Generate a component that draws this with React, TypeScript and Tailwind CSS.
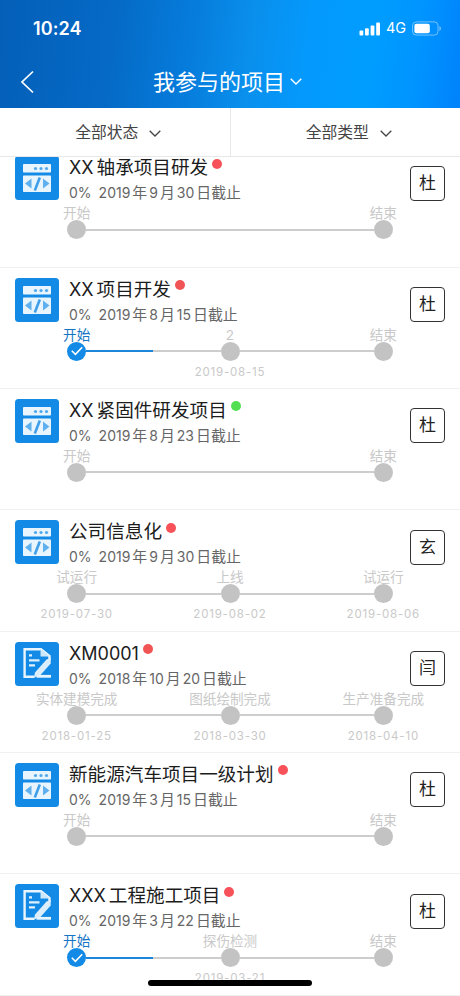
type Step = {
  label?: string;
  date?: string;
  done?: boolean;
  hidden?: boolean;
};

type Project = {
  kind: 'code' | 'doc';
  title: string;
  deadline: string;
  status: string;
  owner: string;
  steps: Step[];
};

const START_END: Step[] = [{ label: '开始' }, { hidden: true }, { label: '结束' }];

const projects: Project[] = [
  { kind: 'code', title: 'XX轴承项目研发', deadline: '2019年9月30日截止', status: 'bg-[#f75259]', owner: '杜', steps: START_END },
  {
    kind: 'code',
    title: 'XX项目开发',
    deadline: '2019年8月15日截止',
    status: 'bg-[#f05455]',
    owner: '杜',
    steps: [{ label: '开始', done: true }, { label: '2', date: '2019-08-15' }, { label: '结束' }],
  },
  { kind: 'code', title: 'XX紧固件研发项目', deadline: '2019年8月23日截止', status: 'bg-[#52e052]', owner: '杜', steps: START_END },
  {
    kind: 'code',
    title: '公司信息化',
    deadline: '2019年9月30日截止',
    status: 'bg-[#f75259]',
    owner: '玄',
    steps: [
      { label: '试运行', date: '2019-07-30' },
      { label: '上线', date: '2019-08-02' },
      { label: '试运行', date: '2019-08-06' },
    ],
  },
  {
    kind: 'doc',
    title: 'XM0001',
    deadline: '2018年10月20日截止',
    status: 'bg-[#f05455]',
    owner: '闫',
    steps: [
      { label: '实体建模完成', date: '2018-01-25' },
      { label: '图纸绘制完成', date: '2018-03-30' },
      { label: '生产准备完成', date: '2018-04-10' },
    ],
  },
  { kind: 'code', title: '新能源汽车项目一级计划', deadline: '2019年3月15日截止', status: 'bg-[#f75259]', owner: '杜', steps: START_END },
  {
    kind: 'doc',
    title: 'XXX工程施工项目',
    deadline: '2019年3月22日截止',
    status: 'bg-[#f75259]',
    owner: '杜',
    steps: [{ label: '开始', done: true }, { label: '探伤检测', date: '2019-03-21' }, { label: '结束' }],
  },
];

// splits mixed text so latin runs get a little air next to CJK
function Mixed({ text, latin }: { text: string; latin: string }) {
  const runs = text.match(/[\x00-\x7f]+|[^\x00-\x7f]+/g) || [];
  return (
    <>
      {runs.map((run, i) => (
        <span key={i} className={run.charCodeAt(0) < 128 ? latin : undefined}>
          {run}
        </span>
      ))}
    </>
  );
}

function Chevron({ className }: { className: string }) {
  return (
    <svg viewBox="0 0 12 7" fill="none" stroke="currentColor" className={className}>
      <path d="M0.7 0.8 6 6 11.3 0.8" />
    </svg>
  );
}

function StatusBar() {
  return (
    <div className="flex h-[57px] items-center justify-between pr-[18px] pl-[33px]">
      <span className="text-[18px] leading-none font-semibold tracking-[0.1px]">10:24</span>
      <div className="flex items-center">
        <svg width="22" height="14" viewBox="0 0 22 14" fill="currentColor">
          <rect x="0.5" y="8.6" width="3.8" height="5" rx="1" />
          <rect x="6" y="6.2" width="3.8" height="7.4" rx="1" />
          <rect x="11.6" y="3.4" width="3.8" height="10.2" rx="1" />
          <rect x="17.2" y="0.6" width="3.8" height="13" rx="1" />
        </svg>
        <span className="ml-[5px] w-[20px] text-[14.5px] leading-none">4G</span>
        <svg width="30" height="15" viewBox="0 0 30 15" fill="none" className="ml-[6px]">
          <rect x="0.6" y="0.9" width="25.4" height="13.2" rx="3.6" stroke="#fff" strokeOpacity="0.45" />
          <rect x="2.4" y="2.7" width="15.4" height="9.6" rx="2" fill="#fff" />
          <path d="M27.4 5v5c1-.4 1.6-1.4 1.6-2.5S28.4 5.4 27.4 5Z" fill="#fff" fillOpacity="0.45" />
        </svg>
      </div>
    </div>
  );
}

function Filter({ label }: { label: string }) {
  return (
    <button className="flex flex-1 items-center justify-center gap-[11px] pt-[2px] pl-[7px] text-[15.8px] text-[#444]">
      {label}
      <Chevron className="h-[7px] w-3 stroke-[1.3]" />
    </button>
  );
}

function CodeIcon() {
  return (
    <svg viewBox="0 0 44 44" fill="none" className="size-11">
      <rect width="44" height="44" rx="3.5" fill="#128ae6" />
      <rect x="8" y="8" width="28" height="8.5" rx="0.8" fill="#e9f5fe" />
      <g fill="#4fa8ec">
        <circle cx="20.5" cy="12.5" r="1.6" />
        <circle cx="26" cy="12.5" r="1.6" />
        <circle cx="31.5" cy="12.5" r="1.6" />
      </g>
      <rect x="8" y="19.5" width="28" height="16.5" rx="0.8" fill="#e9f5fe" />
      <path d="M16.5 22.5v10L10 27.5Z M28 22.5v10l6.5-5Z" fill="#5fb0ee" />
      <path d="m24.8 21.5-5 13" stroke="#3f9fea" strokeWidth="2.6" />
    </svg>
  );
}

function DocIcon() {
  return (
    <svg viewBox="0 0 44 44" fill="none" className="size-11">
      <rect width="44" height="44" rx="3.5" fill="#128ae6" />
      <path d="M19.5 34.800H9.6V7.3H26L34.500 14v4.500" stroke="#e9f5fe" strokeWidth="2.4" />
      <path d="M25.5 7v7.500h9.500Z" fill="#cde7fa" />
      <path d="M14 13.300h3M14 18.300h10.500M14 23.300h6" stroke="#e0f1fd" strokeWidth="2.2" />
      <path d="M21.500 34.300H36" stroke="#e9f5fe" strokeWidth="2.8" />
      <path d="M35.700 16v5.500L25.500 33 19 35.500 20 30.500 31.500 17.500Z" fill="#dceefc" />
    </svg>
  );
}

function StepNode({ step, first, last }: { step: Step; first: boolean; last: boolean }) {
  return (
    <div className="flex flex-col items-center">
      <span className={`h-[14px] text-[13.6px] leading-[14px] whitespace-nowrap ${step.done ? 'text-[#1674c4]' : 'text-[#c9c9c9]'}`}>
        {step.label}
      </span>
      <div className="flex h-[19px] w-full items-center">
        <div className={`h-[2px] flex-1 ${first ? '' : 'bg-[#cdcdcd]'}`} />
        {step.hidden ? (
          <div className="h-[2px] w-[19px] bg-[#cdcdcd]" />
        ) : (
          <div className={`flex size-[19px] items-center justify-center rounded-full ${step.done ? 'bg-[#128ae6]' : 'bg-[#c3c3c3]'}`}>
            {step.done && (
              <svg viewBox="0 0 12 10" fill="none" stroke="#fff" strokeWidth="1.6" className="h-[10px] w-3">
                <path d="m0.8 4.8 3.6 3.5L11.2 1.2" />
              </svg>
            )}
          </div>
        )}
        <div className={`h-[2px] flex-1 ${last ? '' : step.done ? 'bg-[#1c86dc]' : 'bg-[#cdcdcd]'}`} />
      </div>
      <span className="mt-1 text-[11.5px] leading-[14px] tracking-[0.8px] text-[#c9c9c9]">{step.date}</span>
    </div>
  );
}

function ProjectRow({ project }: { project: Project }) {
  return (
    <li className="h-[121.33px] shrink-0 border-b border-[#f0f0f0]">
      <div className="flex h-[60px] px-[15px] pt-[10px]">
        {project.kind === 'code' ? <CodeIcon /> : <DocIcon />}
        <div className="ml-[10px] flex-1">
          <h3 className="flex h-[24px] text-[18.6px] leading-[23px] whitespace-nowrap text-[#1c1c1c]">
            <Mixed text={project.title} latin="text-[18px] mr-[3px] last-of-type:mr-0" />
            <i className={`mt-[2.5px] ml-[4px] size-[10px] rounded-full ${project.status}`} />
          </h3>
          <p className="mt-[3px] flex h-5 text-[14.9px] leading-5 whitespace-nowrap text-[#666]">
            <span className="mr-[5px] text-[14px]">0%</span>
            <Mixed text={project.deadline} latin="text-[14px] mx-[2px]" />
          </p>
        </div>
        <div className="mt-[9.5px] flex size-[35px] items-center justify-center rounded-[4px] border-[1.5px] border-[#333] text-[17px] leading-none text-[#222]">
          {project.owner}
        </div>
      </div>
      <div className="grid grid-cols-3">
        {project.steps.map((step, i) => (
          <StepNode key={i} step={step} first={i === 0} last={i === project.steps.length - 1} />
        ))}
      </div>
    </li>
  );
}

export default function App() {
  return (
    <div className="relative flex h-[996px] w-[460px] flex-col overflow-hidden bg-white font-[Inter,'Noto_Sans_CJK_SC',sans-serif]">
      <header className="h-[108px] shrink-0 bg-[linear-gradient(97deg,#045fb8_0%,#056ac6_25%,#067ddd_42%,#0a8fec_54%,#0499fc_66%,#009dff_80%,#0094ff_90%,#0082fb_100%)] text-white">
        <StatusBar />
        <div className="flex h-[49px] items-center">
          <svg width="14" height="24" viewBox="0 0 14 24" fill="none" stroke="currentColor" strokeWidth="1.7" className="ml-5">
            <path d="M13 1.5 2 12l11 10.5" />
          </svg>
          <h1 className="flex flex-1 items-center justify-center gap-[5px] pr-[39px] text-[22px] leading-none font-normal">
            我参与的项目
            <Chevron className="h-[7px] w-3 stroke-[1.4]" />
          </h1>
        </div>
      </header>
      <div className="flex h-[49px] shrink-0 divide-x divide-[#e8e8e8] border-b border-[#e8e8e8]">
        <Filter label="全部状态" />
        <Filter label="全部类型" />
      </div>
      <main className="min-h-0 flex-1 overflow-hidden">
        <ul className="-mt-[10.7px] flex flex-col">
          {projects.map((project) => (
            <ProjectRow key={project.title} project={project} />
          ))}
        </ul>
      </main>
      <div className="absolute bottom-[10px] left-[148px] h-[6px] w-[164px] rounded-full bg-black" />
    </div>
  );
}
